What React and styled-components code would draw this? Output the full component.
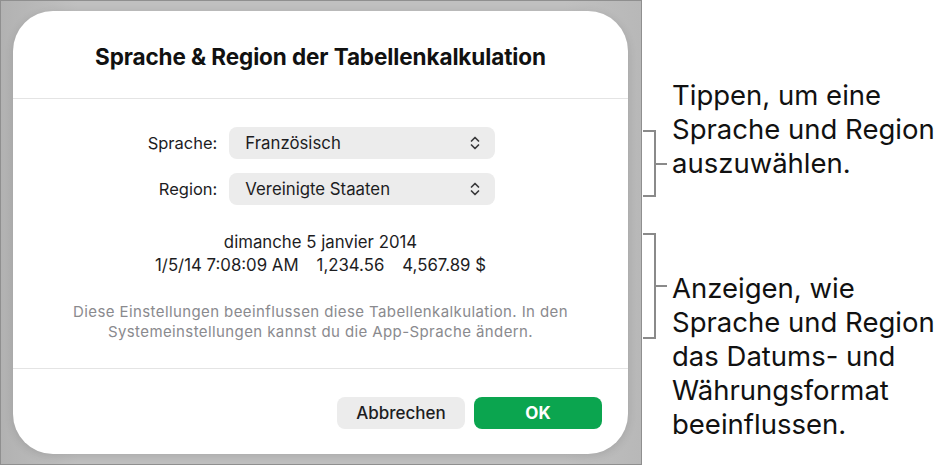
import React from 'react'
import styled, { createGlobalStyle } from 'styled-components';

const GlobalStyle = createGlobalStyle`
  html, body {
    margin: 0;
    padding: 0;
    background: #ffffff;
  }
  body {
    font-family: Inter, "Noto Sans", "Liberation Sans", sans-serif;
    color: #1d1d1f;
  }
`;

function UpDownIcon() {
    return (
        <svg width="12" height="16" viewBox="0 0 12 16" fill="none">
            <path d="M2.5 6 L6 2.5 L9.5 6" stroke="#3a3a3c" strokeWidth="1.7" strokeLinecap="round" strokeLinejoin="round" />
            <path d="M2.5 10 L6 13.5 L9.5 10" stroke="#3a3a3c" strokeWidth="1.7" strokeLinecap="round" strokeLinejoin="round" />
        </svg>
    )
}

function App() {
    return (
        <Page>
            <GlobalStyle />
            <Frame>
                <Dialog>
                    <Header>
                        <Title>Sprache &amp; Region der Tabellenkalkulation</Title>
                    </Header>
                    <Body>
                        <FormGrid>
                            <Label>Sprache:</Label>
                            <Select>
                                <span>Französisch</span>
                                <UpDownIcon />
                            </Select>
                            <Label>Region:</Label>
                            <Select>
                                <span>Vereinigte Staaten</span>
                                <UpDownIcon />
                            </Select>
                        </FormGrid>
                        <Preview>
                            <div>dimanche 5 janvier 2014</div>
                            <PreviewRow>
                                <span>1/5/14 7:08:09 AM</span>
                                <span>1,234.56</span>
                                <span>4,567.89 $</span>
                            </PreviewRow>
                        </Preview>
                        <Note>
                            Diese Einstellungen beeinflussen diese Tabellenkalkulation. In den<br />
                            Systemeinstellungen kannst du die App-Sprache ändern.
                        </Note>
                    </Body>
                    <Footer>
                        <Button>Abbrechen</Button>
                        <Button primary>OK</Button>
                    </Footer>
                </Dialog>
            </Frame>
            <Callouts>
                <Callout>
                    <Bracket offset={52} size={67} />
                    <CalloutText>
                        Tippen, um eine<br />
                        Sprache und Region<br />
                        auszuwählen.
                    </CalloutText>
                </Callout>
                <Callout second>
                    <Bracket offset={-38} size={106} />
                    <CalloutText>
                        Anzeigen, wie<br />
                        Sprache und Region<br />
                        das Datums- und<br />
                        Währungsformat<br />
                        beeinflussen.
                    </CalloutText>
                </Callout>
            </Callouts>
        </Page>
    )
}

export default App

const Page = styled.div`
display:flex;
width:943px;
height:467px;
`;

const Frame = styled.div`
box-sizing:border-box;
width:642px;
height:465px;
flex-shrink:0;
border:1px solid #8f8f8f;
padding:10px 13px 10px 12px;
display:flex;
background:linear-gradient(90deg, #b2b2b2 0%, #c0c0c0 12%, #c0c0c0 88%, #b8b8b8 100%);
`;

const Dialog = styled.div`
flex:1;
display:flex;
flex-direction:column;
background:#ffffff;
border-radius:40px;
box-shadow:0 2px 10px rgba(0,0,0,0.12);
overflow:hidden;
`;

const Header = styled.div`
height:88px;
box-sizing:border-box;
padding-top:34px;
border-bottom:1px solid #e4e4e4;
text-align:center;
`;

const Title = styled.h1`
margin:0;
font-size:22.5px;
line-height:24px;
font-weight:700;
color:#111111;
letter-spacing:-0.1px;
`;

const Body = styled.div`
padding:28px 20px 26px;
border-bottom:1px solid #e4e4e4;
display:flex;
flex-direction:column;
align-items:center;
`;

const FormGrid = styled.div`
display:grid;
grid-template-columns:auto 266px;
column-gap:12px;
row-gap:14px;
align-items:center;
margin-left:2px;
`;

const Label = styled.div`
text-align:right;
font-size:16.5px;
color:#1d1d1f;
`;

const Select = styled.div`
height:32px;
box-sizing:border-box;
padding:0 14px 0 16px;
display:flex;
align-items:center;
justify-content:space-between;
background:#ececec;
border-radius:8px;
font-size:16.8px;
color:#1d1d1f;
`;

const Preview = styled.div`
margin-top:26px;
text-align:center;
font-size:16.8px;
line-height:23px;
color:#1d1d1f;
`;

const PreviewRow = styled.div`
display:flex;
gap:18px;
justify-content:center;
`;

const Note = styled.p`
margin:25px 0 0;
text-align:center;
font-size:15px;
line-height:20px;
letter-spacing:0.4px;
color:#8a8a8e;
`;

const Footer = styled.div`
flex:1;
display:flex;
justify-content:flex-end;
align-items:flex-start;
gap:9px;
padding:28px 26px 0;
`;

const Button = styled.button`
width:128px;
height:32px;
border:none;
border-radius:8px;
font-family:inherit;
font-size:17px;
font-weight:${p => (p.primary ? 700 : 500)};
color:${p => (p.primary ? '#ffffff' : '#1d1d1f')};
background:${p => (p.primary ? '#0ba54f' : '#ececec')};
`;

const Callouts = styled.div`
flex:1;
display:flex;
flex-direction:column;
padding-top:78px;
`;

const Callout = styled.div`
display:flex;
align-items:flex-start;
margin-top:${p => (p.second ? '74px' : '0')};
`;

const Bracket = styled.div`
position:relative;
box-sizing:border-box;
width:13px;
height:${p => p.size}px;
margin-top:${p => p.offset}px;
margin-left:1px;
border:2px solid #8a8a8a;
border-left:none;
flex-shrink:0;
&::after {
  content:'';
  position:absolute;
  left:100%;
  top:50%;
  width:13px;
  height:2px;
  margin-top:-1px;
  background:#8a8a8a;
}
`;

const CalloutText = styled.div`
margin-left:16px;
font-family:Inter, "Noto Sans", sans-serif;
font-size:27.5px;
line-height:34px;
color:#111111;
`;
